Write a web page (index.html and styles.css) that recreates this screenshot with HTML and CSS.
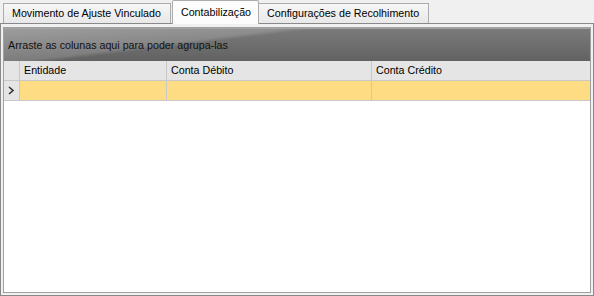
FILE: index.html
```html
<!DOCTYPE html>
<html lang="pt">

<head>
    <meta charset="UTF-8">
    <title>Contabilização</title>
    <link rel="stylesheet" href="styles.css">
</head>

<body>
    <div id="abas">
        <div class="aba">Movimento de Ajuste Vinculado</div>
        <div class="aba ativa">Contabilização</div>
        <div class="aba">Configurações de Recolhimento</div>
    </div>
    <div id="pagina">
        <div id="grade">
            <div class="agrupar">Arraste as colunas aqui para poder agrupa-las</div>
            <div class="linha cabecalho">
                <div class="celula ind"></div>
                <div class="celula">Entidade</div>
                <div class="celula">Conta Débito</div>
                <div class="celula">Conta Crédito</div>
            </div>
            <div class="linha selecionada">
                <div class="celula ind">
                    <svg width="7" height="9" viewBox="0 0 7 9">
                        <path d="M1 1 L5 4.5 L1 8" fill="none" stroke="#333" stroke-width="1.6"/>
                    </svg>
                </div>
                <div class="celula"></div>
                <div class="celula"></div>
                <div class="celula"></div>
            </div>
        </div>
    </div>
</body>

</html>
```

FILE: styles.css
```css
* {
    box-sizing: border-box;
    margin: 0;
    padding: 0;
}

body {
    width: 594px;
    height: 296px;
    background-color: #f0f0f0;
    font-family: "Liberation Sans", Arial, sans-serif;
    font-size: 10.7px;
    color: #000;
    display: flex;
    flex-direction: column;
}

#abas {
    display: flex;
    align-items: flex-end;
    height: 23px;
    padding-left: 3px;
    position: relative;
    z-index: 1;
}

.aba {
    height: 20px;
    padding: 0 9px 0 8px;
    line-height: 19px;
    border: 1px solid #acacac;
    border-bottom: none;
    background: linear-gradient(#f6f6f6, #e8e8e8);
    white-space: nowrap;
}

.aba.ativa {
    height: 24px;
    margin-bottom: -1px;
    line-height: 23px;
    padding: 0 7px 0 8px;
    background: #fcfcfc;
    border-radius: 2px 2px 0 0;
    margin-left: 1px;
    margin-right: -1px;
}

#pagina {
    flex: 1;
    border: 1px solid #898989;
    padding: 3px 2px 2px 2px;
    display: flex;
}

#grade {
    flex: 1;
    border: 1px solid #a0a0a0;
    background-color: #fff;
}

/* faixa escura com o brilho diagonal no canto */
.agrupar {
    height: 33px;
    padding: 10px 0 0 4px;
    color: #111;
    border-top: 1px solid #a2a2a2;
    background:
        linear-gradient(173deg, rgba(255, 255, 255, 0.26) 0, rgba(255, 255, 255, 0.16) 34px, rgba(255, 255, 255, 0) 38px),
        linear-gradient(#7a7a7a, #626262);
}

.linha {
    display: grid;
    grid-template-columns: 16px 147px 205px 1fr;
    height: 20px;
    border-bottom: 1px solid #c8c8c8;
}

.cabecalho {
    background-color: #e5e5e5;
}

.selecionada {
    background-color: #fddc84;
}

.celula {
    border-right: 1px solid #c8c8c8;
    padding-left: 4px;
    line-height: 19px;
    white-space: nowrap;
}

.celula:last-child {
    border-right: none;
}

.ind {
    background-color: #e5e5e5;
    padding-left: 4px;
    display: flex;
    align-items: center;
}
```
